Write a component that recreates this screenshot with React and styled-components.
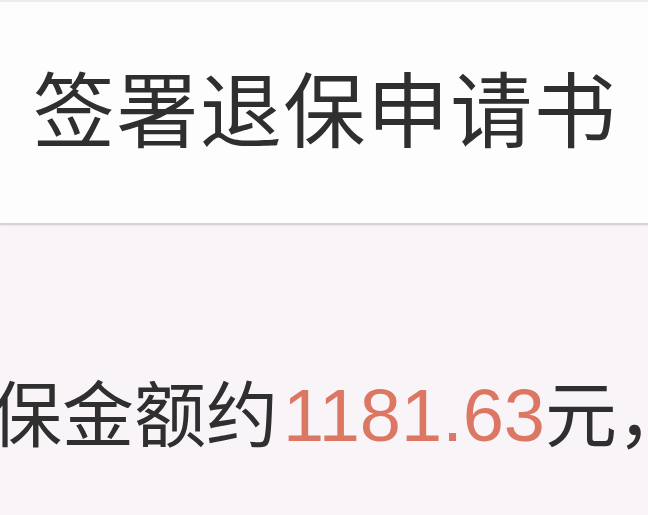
import React from "react"
import styled, { createGlobalStyle } from "styled-components"

const GlobalStyle = createGlobalStyle`
    html, body {
        margin: 0;
        padding: 0;
        background: #f9f4f8;
    }
    body {
        font-family: "Noto Sans CJK SC", "Noto Sans", sans-serif;
    }
`

const Page = styled.div`
    width: 648px;
    height: 515px;
    overflow: hidden;
    display: flex;
    flex-direction: column;
    background: #f9f4f8;
`

const Header = styled.header`
    height: 221px;
    flex-shrink: 0;
    display: flex;
    align-items: center;
    justify-content: center;
    background: #fdfdfd;
    border-top: 2px solid #ececec;
    border-bottom: 2px solid #d6d3d6;
    box-shadow: 0 1px 2px rgba(0, 0, 0, 0.06);
`

const Title = styled.h1`
    margin: 0;
    padding: 0 0 14px 2px;
    font-size: 82px;
    font-weight: 400;
    line-height: 1;
    color: #2f2f2f;
    letter-spacing: 1.5px;
`

const Body = styled.main`
    flex: 1;
    display: flex;
    align-items: flex-start;
    padding-top: 149px;
    overflow: hidden;
`

const Sentence = styled.p`
    margin: 0 0 0 -10px;
    white-space: nowrap;
    font-size: 72px;
    line-height: 1;
    color: #2f2f2f;
`

const Amount = styled.span`
    font-family: "Liberation Sans", Arial, sans-serif;
    font-size: 74px;
    margin: 0 0 0 5px;
    color: #dc7763;
`

export default function App() {
    return (
        <>
            <GlobalStyle />
            <Page>
                <Header>
                    <Title>签署退保申请书</Title>
                </Header>
                <Body>
                    <Sentence>
                        保金额约<Amount>1181.63</Amount>元，
                    </Sentence>
                </Body>
            </Page>
        </>
    )
}
